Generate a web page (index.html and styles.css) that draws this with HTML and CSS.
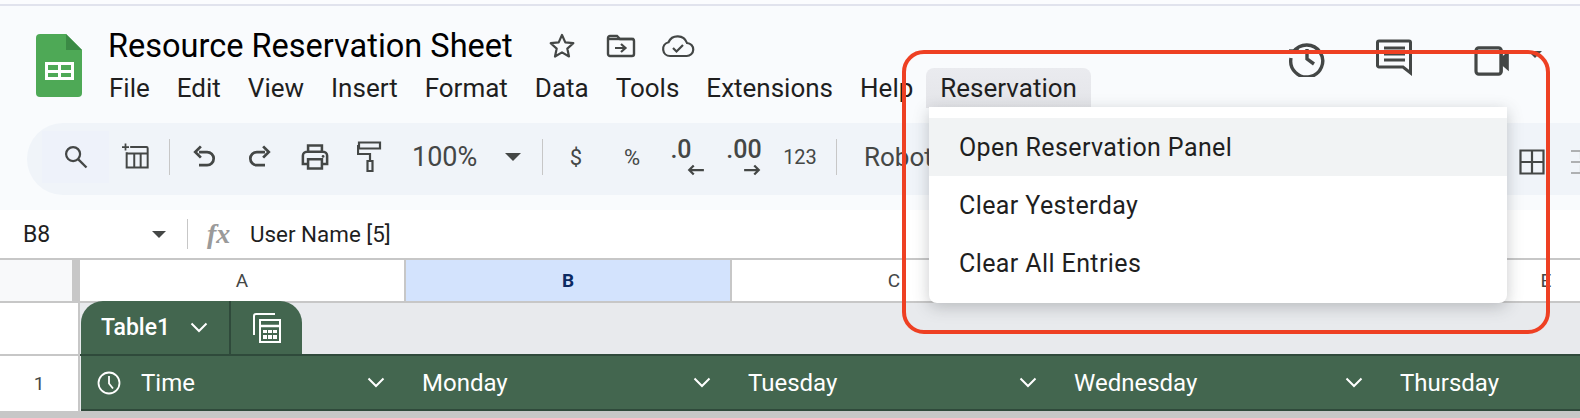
FILE: index.html
```html
<!DOCTYPE html>
<html lang="en">
<head>
<meta charset="utf-8">
<title>Resource Reservation Sheet</title>
<link rel="stylesheet" href="styles.css">
</head>
<body>
<div class="app">
  <header class="header">
    <div class="topbar">
      <svg class="logo" viewBox="0 0 46 63"><path d="M4 0H30L46 16V59a4 4 0 0 1-4 4H4a4 4 0 0 1-4-4V4a4 4 0 0 1 4-4z" fill="#4ea956"/><path d="M30 0L46 16H30z" fill="#3b8a45"/><path d="M9 28H38V46H9z" fill="#fff"/><path d="M12 31H22V36H12zM25 31H35V36H25zM12 39H22V43H12zM25 39H35V43H25z" fill="#4ea956"/></svg>
      <div class="docinfo">
        <div class="titlerow">
          <span class="title">Resource Reservation Sheet</span>
          <svg class="ti ti-star" viewBox="0 0 28 28"><path d="M14 3l3.300 7.400 8 .8-6 5.400 1.700 7.900L14 20.400 7 24.500l1.700-7.900-6-5.400 8-.8z" fill="none" stroke="#444746" stroke-width="2.200" stroke-linejoin="round"/></svg>
          <svg class="ti ti-folder" viewBox="0 0 30 24"><path d="M2 4a2 2 0 0 1 2-2h7l3 3h12a2 2 0 0 1 2 2v13a2 2 0 0 1-2 2H4a2 2 0 0 1-2-2z" fill="none" stroke="#444746" stroke-width="2.400"/><path d="M2 5h26" stroke="#444746" stroke-width="2.400"/><path d="M9 14h10M15 10l4.500 4-4.500 4" fill="none" stroke="#444746" stroke-width="2.200"/></svg>
          <svg class="ti ti-cloud" viewBox="0 0 34 24"><path d="M9 22a7 7 0 0 1-1.500-13.800A10 10 0 0 1 26 9a6.500 6.500 0 0 1-.5 13z" fill="none" stroke="#444746" stroke-width="2.200"/><path d="M12 14l3.500 3.500L22 11" fill="none" stroke="#444746" stroke-width="2.200"/></svg>
        </div>
        <nav class="menubar">
          <span class="menu">File</span>
          <span class="menu">Edit</span>
          <span class="menu">View</span>
          <span class="menu">Insert</span>
          <span class="menu">Format</span>
          <span class="menu">Data</span>
          <span class="menu">Tools</span>
          <span class="menu">Extensions</span>
          <span class="menu">Help</span>
          <span class="menu menu-open">Reservation</span>
        </nav>
      </div>
      <div class="actions">
        <svg class="act act-history" viewBox="0 0 38 38"><path d="M5.500 13A16 16 0 1 1 3 19" fill="none" stroke="#444746" stroke-width="3.400"/><path d="M1 12h10" stroke="#444746" stroke-width="3.400"/><path d="M19 10v10l7 5" fill="none" stroke="#444746" stroke-width="3.400"/></svg>
        <svg class="act act-comment" viewBox="0 0 38 38"><path d="M3 2h30a1.500 1.500 0 0 1 1.500 1.500V34L27 28H3a1.500 1.500 0 0 1-1.500-1.500V3.500A1.500 1.500 0 0 1 3 2z" fill="none" stroke="#444746" stroke-width="3"/><path d="M8 9h21M8 15h21M8 21h21" stroke="#444746" stroke-width="3"/></svg>
        <svg class="act act-video" viewBox="0 0 38 32"><path d="M6 2h21a3 3 0 0 1 3 3v22a3 3 0 0 1-3 3H6a3 3 0 0 1-3-3V5a3 3 0 0 1 3-3z" fill="none" stroke="#444746" stroke-width="3.400"/><path d="M28 2h1v28h-1zM30 12l8-7v22l-8-7z" fill="#444746"/></svg>
        <span class="caret caret-act"></span>
      </div>
    </div>
    <div class="toolbar">
      <span class="tb tb-search"><svg viewBox="0 0 24 24"><circle cx="9.500" cy="9.500" r="6" fill="none" stroke="#444746" stroke-width="1.900"/><path d="M14 14l7 7" stroke="#444746" stroke-width="2"/></svg></span>
      <span class="tb tb-table"><svg viewBox="0 0 24 24"><path d="M0 3.500h6M3 .5v6" stroke="#444746" stroke-width="1.500"/><path d="M7 3.500h14a1 1 0 0 1 1 1V21H4V8" fill="none" stroke="#444746" stroke-width="1.700"/><path d="M4 9h18M10.500 9v12M16 9v12" stroke="#444746" stroke-width="1.700"/></svg></span>
      <span class="sep"></span>
      <span class="tb tb-undo"><svg viewBox="0 0 24 24"><path d="M8 8H14.500a5 5 0 0 1 0 10.500H8" fill="none" stroke="#444746" stroke-width="2.200"/><path d="M9.500 3.500L5 8l4.500 4.500" fill="none" stroke="#444746" stroke-width="2.200"/></svg></span>
      <span class="tb tb-redo"><svg viewBox="0 0 24 24"><path d="M16 8H9.500a5 5 0 0 0 0 10.500H16" fill="none" stroke="#444746" stroke-width="2.200"/><path d="M14.500 3.500L19 8l-4.500 4.500" fill="none" stroke="#444746" stroke-width="2.200"/></svg></span>
      <span class="tb tb-print"><svg viewBox="0 0 26 26"><path d="M7 8V3h12v5M7 19H2.500v-7a3.500 3.500 0 0 1 3.500-3.500h14a3.500 3.500 0 0 1 3.500 3.500v7H19" fill="none" stroke="#444746" stroke-width="2.200"/><path d="M7 15h12v8H7z" fill="none" stroke="#444746" stroke-width="2.200"/><circle cx="20" cy="12.500" r="1.200" fill="#444746"/></svg></span>
      <span class="tb tb-paint"><svg viewBox="0 0 26 32"><path d="M2 1.500h21v6H2z" fill="none" stroke="#444746" stroke-width="2.200"/><path d="M2 5H1v8h12v6" fill="none" stroke="#444746" stroke-width="2.200"/><path d="M10.500 20h5v10h-5z" fill="none" stroke="#444746" stroke-width="2.200"/></svg></span>
      <span class="zoom">100%</span>
      <span class="caret caret-zoom"></span>
      <span class="sep sep-zoom"></span>
      <span class="tt tt-dollar">$</span>
      <span class="tt tt-pct">%</span>
      <span class="dec dec-less"><span class="dec-num">.0</span><svg class="dec-arrow" viewBox="0 0 16 10"><path d="M15 5H2M6 1L2 5l4 4" fill="none" stroke="#444746" stroke-width="2"/></svg></span>
      <span class="dec"><span class="dec-num">.00</span><svg class="dec-arrow" viewBox="0 0 16 10"><path d="M1 5h13M10 1l4 4-4 4" fill="none" stroke="#444746" stroke-width="2"/></svg></span>
      <span class="tt tt-123">123</span>
      <span class="sep sep-font"></span>
      <span class="fontname">Roboto</span>
      <svg class="tb-grid" viewBox="0 0 26 26"><path d="M1.500 1.500h23v23h-23zM13 1.500v23M1.500 13h23" fill="none" stroke="#444746" stroke-width="2.200"/></svg>
      <svg class="tb-merge" viewBox="0 0 26 26"><path d="M2 2h10v8M24 2H14v8M2 24h10v-8M24 24H14v-8M2 13h22" fill="none" stroke="#aeb0b2" stroke-width="2.200"/></svg>
    </div>
  </header>

  <div class="formula">
    <span class="cellref">B8</span>
    <span class="caret caret-ref"></span>
    <span class="sep sep-fx"></span>
    <span class="fx">fx</span>
    <span class="fval">User Name [5]</span>
  </div>

  <div class="sheet">
    <div class="colheads">
      <div class="corner"></div>
      <div class="colhead">A</div>
      <div class="colhead colhead-sel">B</div>
      <div class="colhead">C</div>
      <div class="colhead">D</div>
      <div class="colhead">E</div>
    </div>
    <div class="tabrow">
      <div class="rowhead"></div>
      <div class="tabband">
        <div class="tab">
          <span class="tabname">Table1</span>
          <svg class="chev" viewBox="0 0 18 11"><path d="M1.500 1.500L9 9l7.500-7.500" fill="none" stroke="#fff" stroke-width="2"/></svg>
          <span class="tabdiv"></span>
          <svg class="calc" viewBox="0 0 30 32"><path d="M2 23V4a2 2 0 0 1 2-2h19" fill="none" stroke="#fff" stroke-width="2"/><path d="M8 8h20v22H8z" fill="none" stroke="#fff" stroke-width="2"/><path d="M8 14h20" stroke="#fff" stroke-width="2.500"/><path d="M11 18h4v3h-4zM16 18h4v3h-4zM21 18h4v3h-4zM11 23h4v4h-4zM16 23h4v4h-4zM21 23h4v4h-4z" fill="#fff"/></svg>
        </div>
      </div>
    </div>
    <div class="datarow">
      <div class="rowhead rowhead-num">1</div>
      <div class="thead">
        <div class="th th-first"><svg class="clock" viewBox="0 0 24 24"><circle cx="12" cy="12" r="10.500" fill="none" stroke="#fff" stroke-width="1.800"/><path d="M12 5v7.500l4 5" fill="none" stroke="#fff" stroke-width="1.800"/></svg><span class="thname">Time</span><svg class="chev" viewBox="0 0 18 11"><path d="M1.500 1.500L9 9l7.500-7.500" fill="none" stroke="#fff" stroke-width="2"/></svg></div>
        <div class="th"><span class="thname">Monday</span><svg class="chev" viewBox="0 0 18 11"><path d="M1.500 1.500L9 9l7.500-7.500" fill="none" stroke="#fff" stroke-width="2"/></svg></div>
        <div class="th"><span class="thname">Tuesday</span><svg class="chev" viewBox="0 0 18 11"><path d="M1.500 1.500L9 9l7.500-7.500" fill="none" stroke="#fff" stroke-width="2"/></svg></div>
        <div class="th"><span class="thname">Wednesday</span><svg class="chev" viewBox="0 0 18 11"><path d="M1.500 1.500L9 9l7.500-7.500" fill="none" stroke="#fff" stroke-width="2"/></svg></div>
        <div class="th"><span class="thname">Thursday</span></div>
      </div>
    </div>
  </div>

  <div class="dropdown">
    <div class="ditem ditem-hover">Open Reservation Panel</div>
    <div class="ditem">Clear Yesterday</div>
    <div class="ditem">Clear All Entries</div>
  </div>
  <div class="callout"></div>
</div>
</body>
</html>
```
FILE: styles.css
```css
* { box-sizing: border-box; }
html, body { margin: 0; padding: 0; }
body { width: 1580px; height: 418px; overflow: hidden; background: #c7c7c7; font-family: "Roboto", "Liberation Sans", sans-serif; color: #1f1f1f; }
.app { position: relative; width: 1580px; height: 418px; overflow: hidden; display: flex; flex-direction: column; }

.header { height: 206px; flex: none; background: #f9fbfd; border-top: 2px solid #e1e3ed; margin-top: 4px; display: flex; flex-direction: column; position: relative; box-shadow: 0 -4px 0 #fbfcfe; }
.topbar { height: 117px; flex: none; display: flex; padding: 28px 0 0 36px; }
.logo { width: 46px; height: 63px; flex: none; }
.docinfo { margin-left: 26px; display: flex; flex-direction: column; margin-top: -10px; }
.titlerow { height: 44px; display: flex; align-items: center; }
.title { font-size: 32.500px; color: #000; width: 436px; flex: none; white-space: nowrap; }
.ti { flex: none; }
.ti-star { width: 28px; height: 28px; margin-left: 4px; }
.ti-folder { width: 30px; height: 24px; margin-left: 30px; }
.ti-cloud { width: 34px; height: 24px; margin-left: 25px; }
.menubar { display: flex; margin-top: 0; margin-left: 1px; height: 40px; align-items: center; }
.menu { font-size: 26px; color: #1f1f1f; margin-right: 27px; white-space: nowrap; }
.menu-open { margin-left: -14px; padding: 0 14px; height: 40px; line-height: 40px; background: linear-gradient(#eaebef, #e4e5e9); border-radius: 8px 8px 0 0; }
.actions { position: absolute; top: 33px; left: 1288px; display: flex; align-items: flex-start; }
.act { flex: none; }
.act-history { width: 38px; height: 38px; }
.act-comment { width: 38px; height: 38px; margin-left: 50px; }
.act-video { width: 38px; height: 30px; margin-left: 58px; margin-top: 7px; }

.caret { width: 0; height: 0; border-left: 7px solid transparent; border-right: 7px solid transparent; border-top: 7px solid #444746; flex: none; }
.caret-act { margin: 12px 0 0 18px; }

.toolbar { height: 72px; flex: none; margin: 0 0 0 27px; border-radius: 36px 0 0 36px; background: #f0f4f9; display: flex; align-items: center; padding: 0 0 4px 15px; overflow: hidden; white-space: nowrap; }
.tb { width: 56px; height: 52px; flex: none; display: flex; align-items: center; justify-content: center; }
.tb svg { display: block; }
.tb-search { width: 67px; background: #eef2fa; }
.tb-search svg { width: 28px; height: 28px; }
.tb-table { width: 54px; }
.tb-table svg { width: 28px; height: 28px; }
.sep { width: 1px; height: 36px; background: #c7c7c7; flex: none; margin: 0 6px; }
.tb-undo svg, .tb-redo svg { width: 30px; height: 30px; }
.tb-print { margin-left: -1px; }
.tb-print svg { width: 32px; height: 30px; }
.tb-paint { margin-left: -1px; }
.tb-paint svg { width: 26px; height: 32px; }
.zoom { font-size: 27px; color: #444746; margin-left: 14px; width: 93px; flex: none; }
.caret-zoom { border-left-width: 8px; border-right-width: 8px; border-top-width: 8px; }
.sep-zoom { margin: 0 0 0 21px; }
.tt { color: #444746; flex: none; text-align: center; width: 56px; }
.tt-dollar { font-size: 22px; margin-left: 5px; }
.tt-pct { font-size: 22px; }
.tt-123 { font-size: 20px; }
.dec { width: 56px; height: 40px; flex: none; position: relative; display: flex; justify-content: center; font-size: 25px; font-weight: 500; color: #444746; line-height: 26px; }
.dec-less .dec-num { margin-left: -14px; }
.dec-num { display: block; }
.dec-arrow { position: absolute; width: 18px; height: 12px; left: 27px; top: 27px; }
.sep-font { margin: 0 0 0 8px; }
.fontname { font-size: 26px; color: #444746; margin-left: 27px; width: 120px; flex: none; }
.tb-grid { position: absolute; width: 26px; height: 26px; left: 1519px; top: 143px; }
.tb-merge { position: absolute; width: 26px; height: 26px; left: 1569px; top: 143px; }

.formula { height: 50px; flex: none; background: #fff; display: flex; align-items: center; padding-left: 23px; border-bottom: 2px solid #c7c7c7; position: relative; }
.cellref { font-size: 23px; color: #1f1f1f; width: 129px; flex: none; }
.sep-fx { height: 30px; margin: 0 0 0 21px; }
.fx { font-family: "Liberation Serif", serif; font-style: italic; font-size: 28px; color: #9a9a9a; margin-left: 19px; width: 43px; flex: none; font-weight: 700; }
.fval { font-size: 22.400px; color: #1f1f1f; }

.sheet { background: #e8eaed; flex: none; }
.colheads { display: flex; height: 43px; border-bottom: 2px solid #c7c7c7; background: #fff; }
.corner { width: 80px; flex: none; background: #f8f9fa; border-right: 8px solid #c7c7c7; }
.colhead { width: 326px; flex: none; border-right: 2px solid #c7c7c7; display: flex; align-items: center; justify-content: center; font-size: 19px; color: #444746; }
.colhead-sel { background: #d3e3fd; color: #0b2a62; font-weight: 700; }
.tabrow { display: flex; height: 53px; border-bottom: 2px solid #c7c7c7; }
.rowhead { width: 80px; flex: none; background: #fff; border-right: 2px solid #c7c7c7; }
.tabband { flex: 1; background: #e8eaed; display: flex; align-items: flex-end; border-bottom: 2px solid #2f4a3b; margin-bottom: -2px; }
.tab { width: 221px; height: 53px; margin-left: 1px; background: #43664f; border-radius: 22px 22px 0 0; display: flex; align-items: center; padding-left: 20px; color: #fff; }
.tabname { font-size: 23px; font-weight: 500; width: 89px; flex: none; }
.chev { width: 18px; height: 11px; flex: none; }
.tabdiv { width: 2px; height: 53px; background: #2f4a3b; margin-left: 21px; flex: none; }
.calc { width: 30px; height: 32px; margin-left: 21px; flex: none; }
.datarow { display: flex; height: 55px; }
.rowhead-num { display: flex; align-items: center; justify-content: center; font-size: 19px; color: #444746; }
.thead { flex: 1; background: #43664f; display: flex; border-bottom: 2px solid #2f4a3b; margin-left: 1px; overflow: hidden; }
.th { width: 326px; flex: none; display: flex; align-items: center; padding-left: 16px; color: #fff; font-size: 24px; position: relative; }
.th-first { width: 325px; }
.thname { flex: 1; }
.th .chev { margin-right: 21px; }
.clock { width: 24px; height: 24px; margin-right: 20px; flex: none; }

.dropdown { position: absolute; left: 929px; top: 107px; width: 578px; height: 196px; background: #fff; border-radius: 0 0 8px 8px; padding-top: 11px; box-shadow: 0 4px 16px rgba(60,64,67,.28); }
.ditem { height: 58px; padding-left: 30px; display: flex; align-items: center; font-size: 25px; letter-spacing: .4px; color: #1f1f1f; }
.ditem-hover { background: #f1f3f4; }
.callout { position: absolute; left: 902px; top: 50px; width: 648px; height: 284px; border: 4px solid #ee4023; border-radius: 22px; pointer-events: none; }
```
